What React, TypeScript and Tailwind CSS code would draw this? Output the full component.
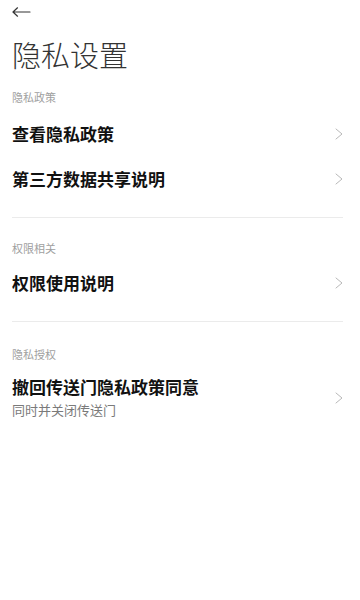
import { ReactNode } from "react";

const font = { fontFamily: '"Noto Sans CJK SC", "Noto Sans", sans-serif' };

function Chevron() {
  return (
    <svg width="8" height="12" viewBox="0 0 8 12" fill="none" className="shrink-0">
      <path d="M1 1 L7 6 L1 11" stroke="#b8b8b8" strokeWidth="1" strokeLinecap="round" strokeLinejoin="round" />
    </svg>
  );
}

function Row({ title, sub }: { title: string; sub?: string }) {
  return (
    <div className={`flex items-center justify-between ${sub ? "pt-[11px] pb-[11px]" : "h-[45px]"}`}>
      <div className="flex flex-col">
        <span className={`text-[17px] font-bold text-[#111] ${sub ? "leading-5" : "leading-[22px]"}`}>{title}</span>
        {sub && <span className="mt-[5px] text-[13px] leading-4 text-[#7a7a7a]">{sub}</span>}
      </div>
      <Chevron />
    </div>
  );
}

function Section({ label, children, className = "" }: { label: string; children: ReactNode; className?: string }) {
  return (
    <div className={className}>
      <div className="h-4 text-[11px] leading-4 text-[#a0a0a0]">{label}</div>
      {children}
    </div>
  );
}

export default function App() {
  return (
    <div className="min-h-[600px] bg-white pl-3 pr-[17px]" style={font}>
      {/* top bar */}
      <div className="flex h-6 items-center">
        <svg width="19" height="10" viewBox="0 0 19 10" fill="none">
          <path d="M1 5 H18 M1 5 L5.5 0.8 M1 5 L5.5 9.2" stroke="#333" strokeWidth="1.2" strokeLinecap="round" />
        </svg>
      </div>

      <h1 className="mt-3 text-[29px] leading-9 font-light text-[#333]">隐私设置</h1>

      <Section label="隐私政策" className="mt-[17px]">
        <div className="mt-[6px]">
          <Row title="查看隐私政策" />
          <Row title="第三方数据共享说明" />
        </div>
      </Section>

      <div className="mt-4 h-px bg-[#ebebeb]" />

      <Section label="权限相关" className="pt-[22px]">
        <div className="mt-1">
          <Row title="权限使用说明" />
        </div>
      </Section>

      <div className="mt-4 h-px bg-[#ebebeb]" />

      <Section label="隐私授权" className="pt-6">
        <div className="mt-1">
          <Row title="撤回传送门隐私政策同意" sub="同时并关闭传送门" />
        </div>
      </Section>
    </div>
  );
}
